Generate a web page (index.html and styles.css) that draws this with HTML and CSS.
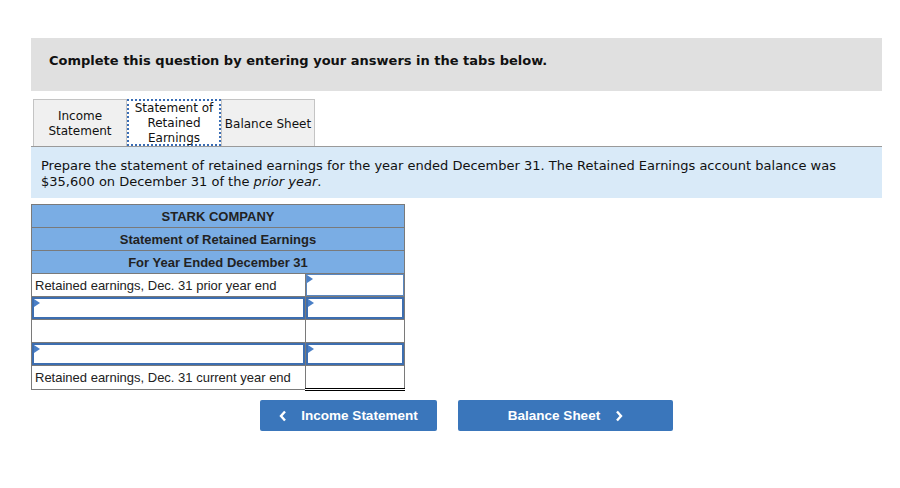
FILE: index.html
```html
<!DOCTYPE html>
<html>
<head>
<meta charset="utf-8">
<link rel="stylesheet" href="styles.css">
</head>
<body>
<div class="page">
  <div class="banner">Complete this question by entering your answers in the tabs below.</div>
  <div class="tabs">
    <div class="tab">Income<br>Statement</div>
    <div class="tab active">Statement of<br>Retained<br>Earnings</div>
    <div class="tab">Balance Sheet</div>
  </div>
  <div class="instr">Prepare the statement of retained earnings for the year ended December 31. The Retained Earnings account balance was $35,600 on December 31 of the <i>prior year</i>.</div>
  <table class="stmt">
    <tr><th colspan="2">STARK COMPANY</th></tr>
    <tr><th colspan="2">Statement of Retained Earnings</th></tr>
    <tr><th colspan="2">For Year Ended December 31</th></tr>
    <tr><td class="lbl">Retained earnings, Dec. 31 prior year end</td><td class="amt"><div class="inp thin"></div></td></tr>
    <tr><td class="lbl"><div class="inp"></div></td><td class="amt"><div class="inp"></div></td></tr>
    <tr><td class="lbl"></td><td class="amt sub"></td></tr>
    <tr><td class="lbl"><div class="inp"></div></td><td class="amt"><div class="inp"></div></td></tr>
    <tr><td class="lbl">Retained earnings, Dec. 31 current year end</td><td class="amt sub total"></td></tr>
  </table>
  <div class="nav">
    <button class="btn prev"><svg class="chev" width="8" height="12" viewBox="0 0 8 12"><polyline points="6,1.5 2,6 6,10.5" fill="none" stroke="#fff" stroke-width="2.4"/></svg>Income Statement</button>
    <button class="btn next">Balance Sheet<svg class="chev" width="8" height="12" viewBox="0 0 8 12"><polyline points="2,1.5 6,6 2,10.5" fill="none" stroke="#fff" stroke-width="2.4"/></svg></button>
  </div>
</div>
</body>
</html>
```
FILE: styles.css
```css
html, body { margin: 0; padding: 0; background: #fff; }
body { font-family: "DejaVu Sans", Verdana, sans-serif; color: #111; }
.page { margin: 38px 18px 0 31px; width: 851px; }
.banner {
  background: #e0e0e0;
  height: 53px;
  box-sizing: border-box;
  padding: 15px 0 0 18px;
  font-weight: bold;
  font-size: 13px;
  line-height: 16px;
  color: #111;
}
.tabs { display: flex; margin-top: 8px; padding-left: 2px; height: 47px; }
.tab {
  width: 94px;
  box-sizing: border-box;
  background: #f0f0f0;
  border: 1px solid #c4c4c4;
  border-bottom: none;
  font-size: 12px;
  line-height: 15px;
  text-align: center;
  display: flex;
  align-items: center;
  justify-content: center;
  padding-top: 2px;
  color: #111;
}
.tab.active { background: #fff; border: 2px dotted #3a6db5; padding-top: 1px; }
.instr {
  background: #d9eaf8;
  border-top: 1px solid #9a9a9a;
  padding: 11px 10px 7px 10px;
  font-size: 13px;
  line-height: 16px;
  height: 33px;
  color: #111;
}
.stmt {
  margin-top: 6px;
  border-collapse: collapse;
  width: 374px;
  font-family: "Liberation Sans", Arial, sans-serif;
  font-size: 13px;
}
.stmt th {
  background: #7aade4;
  border: 1px solid #7a7a7a;
  height: 22px;
  padding: 0;
  font-weight: bold;
  color: #222;
  text-align: center;
}
.stmt td { border: 1px solid #7a7a7a; height: 22px; padding: 0; position: relative; }
.stmt td.lbl { width: 273px; padding-left: 3px; color: #222; }
.stmt td.amt { width: 99px; }
.inp {
  position: absolute;
  inset: 0;
  border: 2px solid #3d6eb0;
  background: #fff;
}
.inp.thin { border: 1px solid #5a87c0; }
.inp::before {
  content: "";
  position: absolute;
  left: 0; top: 0;
  border-top: 4px solid transparent;
  border-bottom: 4px solid transparent;
  border-left: 6px solid #4a7fc6;
}
.stmt td.sub { border-top: 1px solid #000; }
.stmt td.total { border-bottom: 3px double #000; }
.nav { display: flex; gap: 21px; margin-top: 9px; padding-left: 229px; }
.btn {
  height: 31px;
  border: none;
  border-radius: 2px;
  background: #3a76bb;
  color: #fff;
  font-family: "Liberation Sans", Arial, sans-serif;
  font-weight: bold;
  font-size: 13.5px;
  display: flex;
  align-items: center;
  justify-content: center;
  padding: 0;
}
.btn.prev { width: 177px; }
.btn.next { width: 215px; }
.chev { display: block; }
.prev .chev { margin-right: 14px; }
.next .chev { margin-left: 15px; }
```
